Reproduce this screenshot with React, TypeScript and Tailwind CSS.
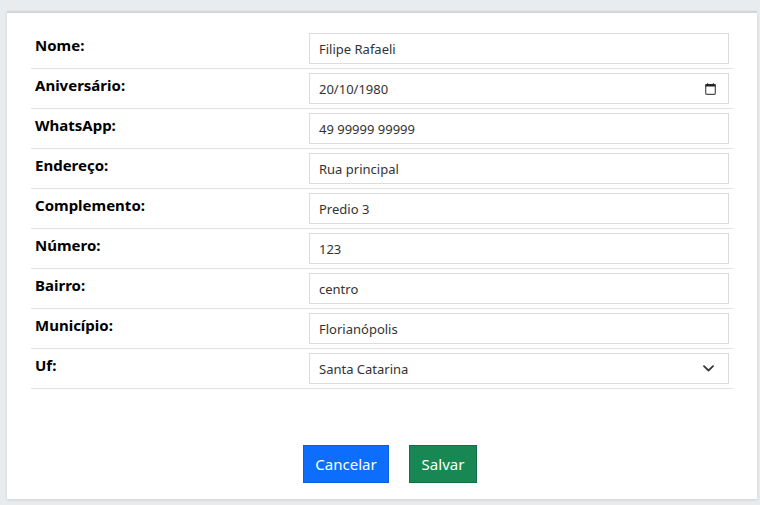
const rows = [
  { label: "Nome:", value: "Filipe Rafaeli" },
  { label: "Aniversário:", value: "20/10/1980", icon: "date" },
  { label: "WhatsApp:", value: "49 99999 99999" },
  { label: "Endereço:", value: "Rua principal" },
  { label: "Complemento:", value: "Predio 3" },
  { label: "Número:", value: "123" },
  { label: "Bairro:", value: "centro" },
  { label: "Município:", value: "Florianópolis" },
  { label: "Uf:", value: "Santa Catarina", icon: "select" },
];

function CalendarIcon() {
  return (
    <svg width="11" height="12" viewBox="0 0 11 12" className="mb-[2px] text-[#222]">
      <rect x="0.7" y="1.7" width="9.6" height="9.6" rx="1" fill="none" stroke="currentColor" strokeWidth="1.2" opacity="0.8" />
      <rect x="0.5" y="1.2" width="10" height="2.3" fill="currentColor" />
      <rect x="2.2" y="0.2" width="1" height="1.5" fill="currentColor" />
      <rect x="7.8" y="0.2" width="1" height="1.5" fill="currentColor" />
    </svg>
  );
}

function ChevronIcon() {
  return (
    <svg width="11" height="7" viewBox="0 0 11 7" fill="none" className="mb-[2px] mr-[2px]">
      <path d="M1 1.2 L5.5 5.5 L10 1.2" stroke="#343a40" strokeWidth="1.8" strokeLinecap="round" strokeLinejoin="round" />
    </svg>
  );
}

export default function App() {
  return (
    <div className="h-[505px] w-[760px] overflow-hidden bg-[#e9ecef] pl-[7px] pt-[11px] font-['Noto_Sans',sans-serif] text-[#212529]">
      <div className="flex h-[488px] w-[750px] flex-col border-t-2 border-t-[#d5d6d8] bg-white pl-6 pt-[16px] shadow-[0_1px_3px_rgba(0,0,0,0.12)]">
        <div className="w-[702px]">
          {rows.map((row) => (
            <div key={row.label} className="flex h-10 border-b border-[#dee2e6] pt-1">
              <div className="w-[278px] pl-1 text-[15px] font-bold leading-6 text-black">{row.label}</div>
              <div className="flex h-[31px] w-[420px] items-center justify-between border border-[#dcdcdc] pl-[9px] pr-[12px] pt-[2px] text-[13px] text-[#333]">
                <span>{row.value}</span>
                {row.icon === "date" && <CalendarIcon />}
                {row.icon === "select" && <ChevronIcon />}
              </div>
            </div>
          ))}
        </div>
        <div className="mt-[56px] flex gap-5 pl-[272px]">
          <button className="h-[38px] w-[86px] border border-[#0d5fd8] bg-[#0d6efd] text-[15px] text-white">Cancelar</button>
          <button className="h-[38px] w-[68px] border border-[#146c43] bg-[#198754] text-[15px] text-white">Salvar</button>
        </div>
      </div>
    </div>
  );
}
